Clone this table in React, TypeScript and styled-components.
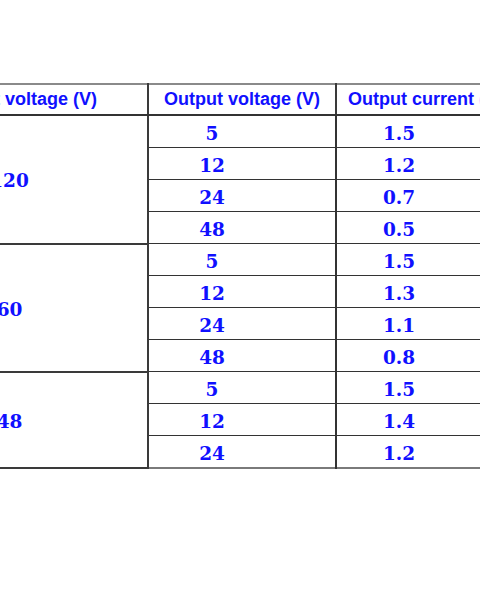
import React from 'react';
import styled, { createGlobalStyle } from 'styled-components';

const GlobalStyle = createGlobalStyle`
  html, body {
    margin: 0;
    padding: 0;
    background: #ffffff;
  }
`;

const Page = styled.div`
  width: 480px;
  height: 600px;
  overflow: hidden;
  padding-top: 83px;
  box-sizing: border-box;
`;

const Table = styled.table`
  border-collapse: collapse;
  margin-left: -96px;
  table-layout: fixed;
  width: 605px;
  border-top: 2px solid #8a8a8a;
  border-bottom: 2px solid #7a7a7a;
`;

const HeadCell = styled.th<{ $w: number }>`
  width: ${p => p.$w}px;
  height: 29px;
  padding: 0;
  border-left: 2px solid #3a3a3a;
  border-right: 2px solid #3a3a3a;
  border-bottom: 2px solid #333;
  font-family: "Liberation Sans", Arial, sans-serif;
  font-weight: bold;
  font-size: 18px;
  color: #1010ff;
  text-align: center;
  vertical-align: middle;
  white-space: nowrap;
`;

const GroupCell = styled.td`
  padding: 3px 34px 0 0;
  border: 2px solid #3a3a3a;
  border-top-color: #333;
  font-family: "DejaVu Serif", "Liberation Serif", serif;
  font-weight: bold;
  font-size: 18.5px;
  color: #1010ff;
  text-align: center;
  vertical-align: middle;
`;

const ValueCell = styled.td<{ $shift: number }>`
  height: 28px;
  padding: 3px ${p => p.$shift}px 0 0;
  border: 2px solid #333;
  border-top-width: 1.5px;
  border-bottom-width: 1.5px;
  font-family: "DejaVu Serif", "Liberation Serif", serif;
  font-weight: bold;
  font-size: 18.5px;
  color: #1010ff;
  text-align: center;
  vertical-align: middle;
`;

type Group = { input: string; rows: [string, string][] };

const groups: Group[] = [
  { input: '120', rows: [['5', '1.5'], ['12', '1.2'], ['24', '0.7'], ['48', '0.5']] },
  { input: '60', rows: [['5', '1.5'], ['12', '1.3'], ['24', '1.1'], ['48', '0.8']] },
  { input: '48', rows: [['5', '1.5'], ['12', '1.4'], ['24', '1.2']] },
];

export default function App() {
  return (
    <>
      <GlobalStyle />
      <Page>
        <Table>
          <thead>
            <tr>
              <HeadCell $w={241}>Input voltage (V)</HeadCell>
              <HeadCell $w={186}>Output voltage (V)</HeadCell>
              <HeadCell $w={178}>Output current (A)</HeadCell>
            </tr>
          </thead>
          <tbody>
            {groups.map(g =>
              g.rows.map(([v, a], i) => (
                <tr key={g.input + v}>
                  {i === 0 && <GroupCell rowSpan={g.rows.length}>{g.input}</GroupCell>}
                  <ValueCell $shift={60}>{v}</ValueCell>
                  <ValueCell $shift={54}>{a}</ValueCell>
                </tr>
              ))
            )}
          </tbody>
        </Table>
      </Page>
    </>
  );
}
